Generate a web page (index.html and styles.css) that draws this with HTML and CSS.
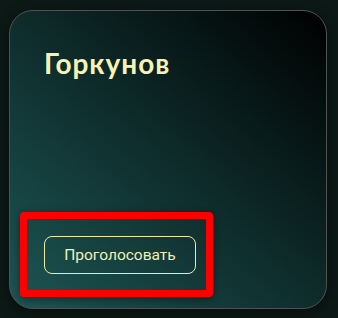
FILE: index.html
```html
<!DOCTYPE html>
<html lang="ru">
<head>
<meta charset="UTF-8">
<meta name="viewport" content="width=device-width, initial-scale=1.0">
<title>Горкунов</title>
<link rel="stylesheet" href="styles.css">
</head>
<body>
  <div class="page">
    <article class="candidate-card">
      <h2 class="candidate-name">Горкунов</h2>

      <div class="vote-area">
        <button class="vote-btn" type="button">Проголосовать</button>
      </div>
    </article>
  </div>
</body>
</html>
```

FILE: styles.css
```css
* {
  margin: 0;
  padding: 0;
  box-sizing: border-box;
}

body {
  font-family: Lato, 'Open Sans', sans-serif;
  background-color: #0c1916;
  width: 338px;
  height: 318px;
  overflow: hidden;
}

.page {
  padding: 10px 11px 9px 9px;
  height: 100%;
}

/* Candidate card */
.candidate-card {
  height: 100%;
  border: 1px solid #4d5352;
  border-radius: 24px;
  background: linear-gradient(to top right, #1d5654 0%, #0e2c2b 50%, #000 100%);
  box-shadow: 0 4px 14px rgba(0, 0, 0, 0.45);
  padding: 36px 34px 34px 34px;
  display: flex;
  flex-direction: column;
  justify-content: space-between;
}

.candidate-name {
  font-size: 28px;
  font-weight: 700;
  line-height: 1.2;
  letter-spacing: 1px;
  color: #f7f3b3;
}

/* Highlighted vote button */
.vote-area {
  position: relative;
  align-self: flex-start;
}

.vote-area::after {
  content: '';
  position: absolute;
  top: -24px;
  left: -24px;
  right: -17px;
  bottom: -23px;
  border: 7px solid #ff0000;
  border-radius: 4px;
  box-shadow: 0 2px 8px rgba(0, 0, 0, 0.45);
  pointer-events: none;
}

.vote-btn {
  display: block;
  width: 152px;
  height: 38px;
  background: transparent;
  border: 1px solid #eeeaa6;
  border-radius: 8px;
  color: #f3efb4;
  font-family: Roboto, 'Liberation Sans', sans-serif;
  font-size: 15.5px;
  cursor: pointer;
}
```
